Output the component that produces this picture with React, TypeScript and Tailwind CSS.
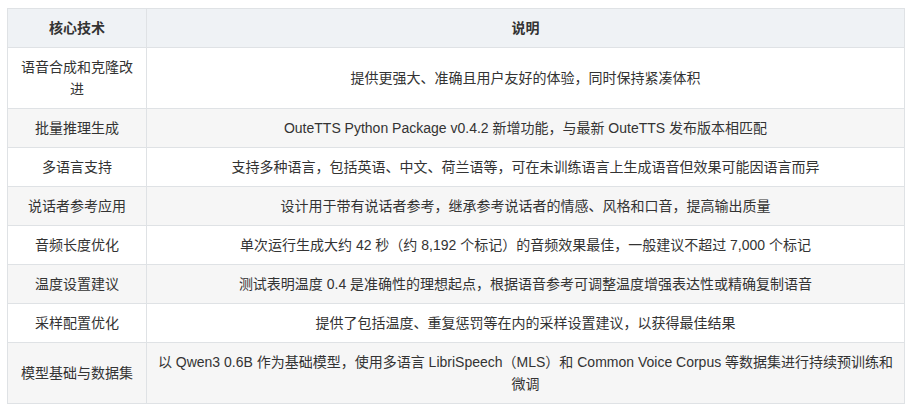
const rows: [string, string][] = [
  ['语音合成和克隆改进', '提供更强大、准确且用户友好的体验，同时保持紧凑体积'],
  ['批量推理生成', 'OuteTTS Python Package v0.4.2 新增功能，与最新 OuteTTS 发布版本相匹配'],
  ['多语言支持', '支持多种语言，包括英语、中文、荷兰语等，可在未训练语言上生成语音但效果可能因语言而异'],
  ['说话者参考应用', '设计用于带有说话者参考，继承参考说话者的情感、风格和口音，提高输出质量'],
  ['音频长度优化', '单次运行生成大约 42 秒（约 8,192 个标记）的音频效果最佳，一般建议不超过 7,000 个标记'],
  ['温度设置建议', '测试表明温度 0.4 是准确性的理想起点，根据语音参考可调整温度增强表达性或精确复制语音'],
  ['采样配置优化', '提供了包括温度、重复惩罚等在内的采样设置建议，以获得最佳结果'],
  ['模型基础与数据集', '以 Qwen3 0.6B 作为基础模型，使用多语言 LibriSpeech（MLS）和 Common Voice Corpus 等数据集进行持续预训练和微调'],
]

export default function App() {
  return (
    <div
      className="bg-white pl-[7px] pt-[8px] text-[14px] leading-[22px] text-[#333]"
      style={{ fontFamily: '"Liberation Sans", "Noto Sans CJK SC", sans-serif' }}
    >
      <table className="w-[898px] border-collapse table-fixed">
        <colgroup>
          <col className="w-[139px]" />
          <col />
        </colgroup>
        <thead>
          <tr className="bg-[#eff2f5]">
            <th className="border border-[#dfe2e5] px-[10px] py-[8px] text-center font-bold">核心技术</th>
            <th className="border border-[#dfe2e5] px-[10px] py-[8px] text-center font-bold">说明</th>
          </tr>
        </thead>
        <tbody>
          {rows.map(([k, v], i) => (
            <tr key={k} className={i % 2 === 1 ? 'bg-[#f6f6f6]' : 'bg-white'}>
              <td className="border border-[#dfe2e5] px-[10px] py-[8px] text-center">{k}</td>
              <td className="border border-[#dfe2e5] px-[10px] py-[8px] text-center">{v}</td>
            </tr>
          ))}
        </tbody>
      </table>
    </div>
  )
}
